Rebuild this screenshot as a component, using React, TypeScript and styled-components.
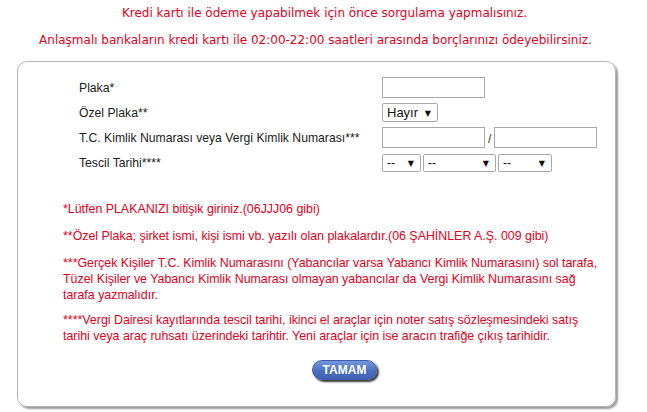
import React from 'react';
import styled, { createGlobalStyle } from 'styled-components';

const GlobalStyle = createGlobalStyle`
    html, body {
        margin: 0;
        padding: 0;
        background: #ffffff;
    }
    body {
        font-family: "Liberation Sans", Arial, sans-serif;
    }
`;

const RED = '#e3001b';

export default function App() {
    return (
        <Page>
            <GlobalStyle/>
            <Header>
                <Notice>Kredi kartı ile ödeme yapabilmek için önce sorgulama yapmalısınız.</Notice>
                <Notice $shift={18}>Anlaşmalı bankaların kredi kartı ile 02:00-22:00 saatleri arasında borçlarınızı ödeyebilirsiniz.</Notice>
            </Header>
            <Card>
                <Form>
                    <Label>Plaka*</Label>
                    <Controls><TextInput $width={103}/></Controls>

                    <Label>Özel Plaka**</Label>
                    <Controls>
                        <SelectBox $width={56} $tall>
                            <SelectText $large>Hayır</SelectText>
                            <Arrow>▼</Arrow>
                        </SelectBox>
                    </Controls>

                    <Label>T.C. Kimlik Numarası veya Vergi Kimlik Numarası***</Label>
                    <Controls>
                        <TextInput $width={103}/>
                        <Slash>/</Slash>
                        <TextInput $width={103}/>
                    </Controls>

                    <Label>Tescil Tarihi****</Label>
                    <Controls>
                        <SelectBox $width={39}>
                            <SelectText>--</SelectText>
                            <Arrow>▼</Arrow>
                        </SelectBox>
                        <SelectBox $width={73}>
                            <SelectText>--</SelectText>
                            <Arrow>▼</Arrow>
                        </SelectBox>
                        <SelectBox $width={54}>
                            <SelectText>--</SelectText>
                            <Arrow>▼</Arrow>
                        </SelectBox>
                    </Controls>
                </Form>

                <Notes>
                    <Note>*Lütfen PLAKANIZI bitişik giriniz.(06JJJ06 gibi)</Note>
                    <Note>**Özel Plaka; şirket ismi, kişi ismi vb. yazılı olan plakalardır.(06 ŞAHİNLER A.Ş. 009 gibi)</Note>
                    <Note>***Gerçek Kişiler T.C. Kimlik Numarasını (Yabancılar varsa Yabancı Kimlik Numarasını) sol tarafa, Tüzel Kişiler ve Yabancı Kimlik Numarası olmayan yabancılar da Vergi Kimlik Numarasını sağ tarafa yazmalıdır.</Note>
                    <Note $pull={2}>****Vergi Dairesi kayıtlarında tescil tarihi, ikinci el araçlar için noter satış sözleşmesindeki satış tarihi veya araç ruhsatı üzerindeki tarihtir. Yeni araçlar için ise aracın trafiğe çıkış tarihidir.</Note>
                </Notes>

                <ButtonRow>
                    <SubmitButton type="button">TAMAM</SubmitButton>
                </ButtonRow>
            </Card>
        </Page>
    );
}

const Page = styled.div`
    width: 647px;
    height: 412px;
    overflow: hidden;
`;

const Header = styled.div`
    display: flex;
    flex-direction: column;
    align-items: center;
    gap: 11px;
    padding-top: 5px;
    padding-left: 2px;
`;

const Notice = styled.div<{ $shift?: number }>`
    font-family: "DejaVu Sans", Verdana, sans-serif;
    font-size: 12px;
    line-height: 16px;
    color: ${RED};
    white-space: nowrap;
    padding-right: ${(p) => p.$shift ?? 0}px;
`;

const Card = styled.div`
    box-sizing: border-box;
    margin: 13px 0 0 17px;
    width: 599px;
    height: 346px;
    border: 1px solid #b4b4b4;
    border-radius: 10px;
    box-shadow: 2px 2px 2px #9a9a9a;
    padding: 13px 0 0 0;
`;

const Form = styled.div`
    display: grid;
    grid-template-columns: 303px auto;
    grid-auto-rows: 25px;
    align-items: center;
    padding-left: 61px;
`;

const Label = styled.div`
    font-size: 12.2px;
    color: #222222;
    white-space: nowrap;
`;

const Controls = styled.div`
    display: flex;
    align-items: center;
    gap: 2px;
`;

const TextInput = styled.input<{ $width: number }>`
    box-sizing: border-box;
    width: ${(p) => p.$width}px;
    height: 21px;
    margin: 0;
    padding: 1px 3px;
    border: 1px solid #a9a9a9;
    background: #ffffff;
    outline: none;
`;

const Slash = styled.span`
    font-size: 12px;
    color: #333333;
    padding: 3px 1px 0 1px;
`;

const SelectBox = styled.div<{ $width: number; $tall?: boolean }>`
    position: relative;
    box-sizing: border-box;
    width: ${(p) => p.$width}px;
    height: ${(p) => (p.$tall ? 19 : 18)}px;
    border: 1px solid #a9a9a9;
    border-radius: 2px;
    background: #ffffff;
    display: flex;
    align-items: center;
    padding-left: 4px;
`;

const SelectText = styled.span<{ $large?: boolean }>`
    font-size: ${(p) => (p.$large ? 13 : 12)}px;
    color: #111111;
    line-height: 1;
`;

const Arrow = styled.span`
    position: absolute;
    right: 6px;
    top: 50%;
    transform: translateY(-50%);
    font-family: "DejaVu Sans", sans-serif;
    font-size: 8px;
    color: #111111;
`;

const Notes = styled.div`
    display: flex;
    flex-direction: column;
    gap: 11px;
    width: 537px;
    margin: 26px 0 0 45px;
`;

const Note = styled.p<{ $pull?: number }>`
    margin: ${(p) => -(p.$pull ?? 0)}px 0 0 0;
    font-size: 12.4px;
    line-height: 16px;
    color: ${RED};
`;

const ButtonRow = styled.div`
    display: flex;
    justify-content: center;
    margin-top: 16px;
    padding-left: 56px;
`;

const SubmitButton = styled.button`
    box-sizing: border-box;
    width: 65px;
    height: 20px;
    padding: 0;
    border: 1px solid #3b5ea8;
    border-radius: 10px;
    background: linear-gradient(#7597dc, #4b70c2 55%, #3d62b3);
    box-shadow: 2px 2px 2px #3a3a3a;
    color: #ffffff;
    font-family: "Liberation Sans", Arial, sans-serif;
    font-size: 12px;
    font-weight: bold;
    cursor: pointer;
`;
